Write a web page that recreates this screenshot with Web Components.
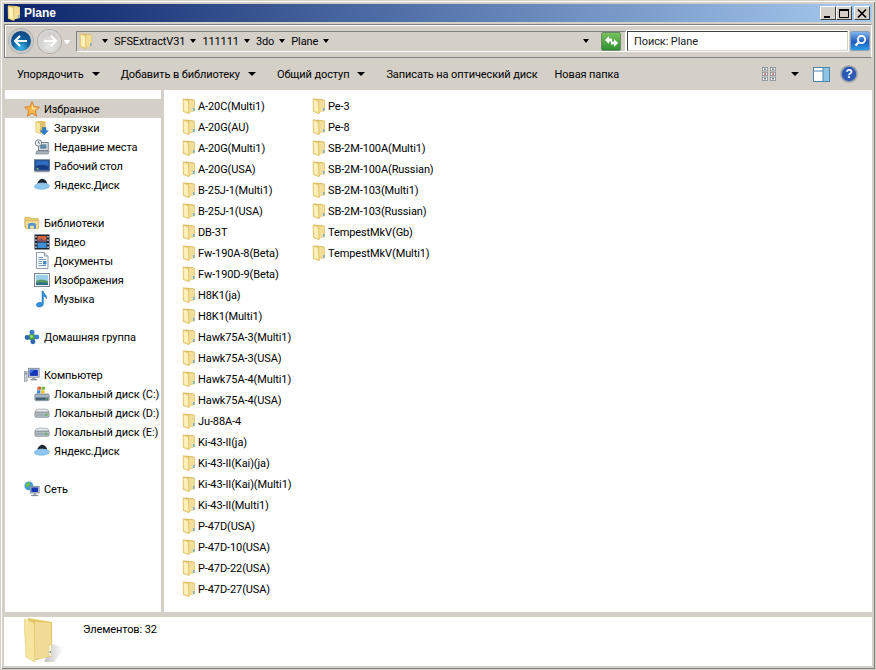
<!DOCTYPE html>
<html>
<head>
<meta charset="utf-8">
<style>
  html, body { margin: 0; padding: 0; height: 100%; overflow: hidden; background: #d4d0c8; }
  body { font: 11px Roboto, "Noto Sans", sans-serif; letter-spacing: -0.1px; color: #000; }
</style>
</head>
<body>
<explorer-window></explorer-window>

<script>
const FOLDER = `
  <svg width="16" height="16" viewBox="0 0 16 16">
    <path d="M2 .5 L11 1 L14 2 L14 13 L9 14 L9 15 L7 15.5 L2 13.5Z" fill="#dcc06a"/>
    <path d="M8 2 L13.5 2.5 L13.5 13 L8 14Z" fill="#f2de98"/>
    <path d="M2 1 L7.6 2.6 L8 15.6 L2.4 13.6Z" fill="#f7e6a0" stroke="#d9b95e" stroke-width=".6"/>
    <path d="M3 2.4 L6.6 3.4 L7 13.8 L3.4 12.6Z" fill="#fcf0bc"/>
    <rect x="12.2" y="10" width="1.2" height="3" fill="#5aa6dc"/>
  </svg>`;

const ICONS = {
  star: `<svg width="18" height="18" viewBox="0 0 18 18"><path d="M9 .8 L11.4 6.4 L17.4 7 L12.8 11 L14.2 17 L9 13.8 L3.8 17 L5.2 11 L.6 7 L6.6 6.4Z" fill="#f9b64a" stroke="#d87a28" stroke-width="1"/><path d="M9 3.5 L10.6 7.4 L14.4 8 L11.4 10.4 L9 9Z" fill="#fde39a"/></svg>`,
  downloads: `<svg width="18" height="18" viewBox="0 0 18 18"><path d="M2 1.5 L10 1 L13 2 L13 13 L7 15 L2 13.5Z" fill="#dcc06a"/><path d="M2 2 L7 3 L7.3 15.5 L2.4 13.5Z" fill="#f8e79f" stroke="#d8b85a" stroke-width=".6"/><path d="M9.5 8.5 H13.5 V12 H16 L11.5 16.8 L7 12 H9.5Z" fill="#2b7fd0" stroke="#1a5a9e" stroke-width=".5"/></svg>`,
  recent: `<svg width="18" height="18" viewBox="0 0 18 18"><rect x="5" y="4" width="11" height="9" fill="#dfe4e8" stroke="#69757f"/><rect x="7" y="6" width="7" height="5" fill="#5f87a6"/><path d="M3 13.5 H17 L16 17 H2Z" fill="#aab3bb" stroke="#69757f" stroke-width=".6"/><circle cx="5" cy="4.5" r="3.6" fill="#eef1f3" stroke="#6d7882"/><path d="M5 2.5 V4.6 H6.8" stroke="#3b4650" fill="none" stroke-width=".8"/></svg>`,
  desktop: `<svg width="18" height="18" viewBox="0 0 18 18"><rect x=".5" y="2" width="17" height="12.5" fill="#1f4f9c" stroke="#5c6d80"/><rect x="2" y="3.5" width="14" height="9.5" fill="#2d6cc0"/><path d="M2 9 Q8 7 16 9 V13 H2Z" fill="#163a80"/><rect x="3" y="11" width="2" height="2" fill="#7cc36a"/><rect x="1" y="14.5" width="16" height="1.5" fill="#8f9aa6"/></svg>`,
  cloud: `<svg width="18" height="14" viewBox="0 0 18 14"><path d="M3.5 6.5 C5 2 8 .5 10.5 1 C13 1.5 14.5 4 15 6.5 C11 5 7.5 5 3.5 6.5Z" fill="#1d2733"/><path d="M.5 9.5 C1 7 5 5.6 9.5 6 C13.5 6.2 17 7.2 17.3 8.6 C17.5 11 13 12.6 8.5 12.6 C4 12.6 .3 11.6 .5 9.5Z" fill="#8fc6ee" stroke="#5ba6e0" stroke-width=".6"/></svg>`,
  library: `<svg width="18" height="18" viewBox="0 0 18 18"><path d="M1 2.5 H7 L8.5 4 H16 V14 H1Z" fill="#e9cd74" stroke="#c7a548" stroke-width=".7"/><path d="M1 6.5 H17 L16 15.5 H2Z" fill="#f2de99" stroke="#c7a548" stroke-width=".6"/><path d="M4.5 15.5 V11 Q4.5 8.6 9 8.6 Q13.5 8.6 13.5 11 V15.5 H11 V12 H7 V15.5Z" fill="#5596cf"/></svg>`,
  video: `<svg width="16" height="16" viewBox="0 0 16 16"><rect x=".5" y=".5" width="15" height="15" fill="#1c2430"/><rect x="3.5" y="2" width="9" height="5.5" fill="#d9633a"/><rect x="3.5" y="8.5" width="9" height="5.5" fill="#3e8fd6"/><path d="M3.5 7 L7 4 L10 6.5 L12.5 5 V7.5 H3.5Z" fill="#76506a"/><g fill="#cfe0ef"><rect x="1.3" y="2" width="1.4" height="1.6"/><rect x="1.3" y="5.4" width="1.4" height="1.6"/><rect x="1.3" y="9" width="1.4" height="1.6"/><rect x="1.3" y="12.4" width="1.4" height="1.6"/><rect x="13.3" y="2" width="1.4" height="1.6"/><rect x="13.3" y="5.4" width="1.4" height="1.6"/><rect x="13.3" y="9" width="1.4" height="1.6"/><rect x="13.3" y="12.4" width="1.4" height="1.6"/></g></svg>`,
  docs: `<svg width="16" height="18" viewBox="0 0 16 18"><path d="M2.5 .5 H10.5 L14 4 V16.5 H2.5Z" fill="#f8fafc" stroke="#8d9aa8"/><path d="M10.5 .5 V4 H14" fill="#d7e1ea" stroke="#8d9aa8"/><g stroke="#7597bd"><path d="M4.5 5.5 H9"/><path d="M4.5 7.5 H12"/><path d="M4.5 9.5 H8"/><path d="M4.5 11.5 H8"/><path d="M4.5 13.5 H12"/></g><rect x="9" y="9" width="3.4" height="3.4" fill="#3f88c8"/></svg>`,
  pictures: `<svg width="16" height="14" viewBox="0 0 16 14"><rect x=".5" y=".5" width="15" height="13" fill="#f1f3f5" stroke="#7a8794"/><rect x="2" y="2" width="12" height="10" fill="#9bd0e8"/><path d="M2 8 Q7 5 14 8 V12 H2Z" fill="#5a9a68"/><path d="M2 10 Q8 8.4 14 10 V12 H2Z" fill="#2f6f8a"/></svg>`,
  music: `<svg width="14" height="18" viewBox="0 0 14 18"><path d="M7 1 L8.2 1 C8.6 4 12.6 5 11.5 9 C11 7 9.6 6.4 8.4 6.2 L8.4 14 C8.4 16 6 17.4 3.6 17 C1 16.6 .6 14.4 2.2 13.2 C3.8 12 6 12.2 7 13Z" fill="#2f8fd8" stroke="#1f6fb2" stroke-width=".5"/></svg>`,
  homegroup: `<svg width="18" height="18" viewBox="0 0 18 18"><circle cx="9" cy="9" r="4" fill="#4aa63f"/><circle cx="9" cy="3.6" r="2.8" fill="#3b7fd0"/><circle cx="3.6" cy="9.6" r="2.8" fill="#2e66b4"/><circle cx="14.4" cy="9" r="2.8" fill="#3b7fd0"/><circle cx="10" cy="14.4" r="2.8" fill="#2e66b4"/><circle cx="8.4" cy="8.4" r="1.6" fill="#9adf7a"/></svg>`,
  computer: `<svg width="18" height="18" viewBox="0 0 18 18"><rect x=".5" y="5" width="3" height="11" fill="#c8ced4" stroke="#7d8791" stroke-width=".7"/><rect x="1.2" y="7" width="1.6" height="1" fill="#44515c"/><rect x="5" y="1.5" width="12" height="10" fill="#d7dce1" stroke="#7d8791"/><rect x="6.4" y="3" width="9.2" height="7" fill="#1437b8"/><path d="M6.4 3 H12 L6.4 8Z" fill="#3a78e0"/><rect x="9" y="11.5" width="4" height="2" fill="#a7b0b8"/><rect x="7" y="13.5" width="8" height="1.5" fill="#8b959e"/></svg>`,
  diskC: `<svg width="18" height="18" viewBox="0 0 18 18"><rect x="1" y="9" width="16" height="7.5" rx="1.5" fill="#a8b6c2" stroke="#5a6875" stroke-width=".7"/><rect x="2" y="13" width="14" height="2.6" fill="#3f5a72"/><rect x="13" y="13.6" width="2" height="1.4" fill="#66d14f"/><path d="M4 1 Q6 0 8 1 L7.5 4.4 Q5.6 3.6 3.6 4.4Z" fill="#e4562c"/><path d="M8.6 1 Q10.6 0 12.6 1 L12.2 4.4 Q10 3.6 8.1 4.4Z" fill="#6cbb3c"/><path d="M3.5 5 Q5.5 4.2 7.4 5 L7 8.4 H3.2Z" fill="#3d89dc"/><path d="M8 5 Q10 4.2 12.1 5 L11.8 8.4 H7.6Z" fill="#f4c22e"/></svg>`,
  disk: `<svg width="18" height="14" viewBox="0 0 18 14"><path d="M1 7 Q1.5 3.5 5 3.5 H13 Q16.5 3.5 17 7Z" fill="#e8ebee" stroke="#8a949d" stroke-width=".7"/><rect x="1" y="7" width="16" height="5.6" rx="1.2" fill="#c4cbd1" stroke="#5e6972" stroke-width=".7"/><rect x="2" y="8.4" width="14" height="3" fill="#a1abb3"/><rect x="12.6" y="9" width="2.4" height="1.8" fill="#4fc13c"/></svg>`,
  network: `<svg width="18" height="18" viewBox="0 0 18 18"><circle cx="5.5" cy="5.5" r="5" fill="#3f9ad8"/><path d="M2 3.5 Q4 1 6.5 1.5 L7 4.5 L4.4 7 L2 6Z M7 7.5 L9.4 6.5 L9.6 9 L7.4 10.2Z" fill="#6cc04a"/><rect x="7" y="6" width="10" height="7.5" fill="#d7dce1" stroke="#7d8791"/><rect x="8.2" y="7.2" width="7.6" height="5.2" fill="#1437b8"/><rect x="11" y="13.5" width="2" height="2.5" fill="#8b959e"/><rect x="8" y="15.6" width="8" height="1.4" fill="#7f8a94"/></svg>`
};

class NavItem extends HTMLElement {
  constructor() {
    super();
    this.attachShadow({ mode: 'open' });
  }
  connectedCallback() {
    const icon = ICONS[this.getAttribute('icon')] || '';
    this.shadowRoot.innerHTML = `
      <style>
        :host { display: flex; align-items: center; height: 19px; white-space: nowrap; }
        :host([head]) { padding-left: 19px; }
        :host(:not([head])) { padding-left: 29px; }
        :host([selected]) { background: #d4d0c8; }
        .i { width: 16px; height: 18px; margin-right: 4px; flex: none; display: flex; align-items: center; justify-content: center; }
        .l { padding-top: 2px; }
        svg { display: block; max-width: 16px; height: auto; }
      </style>
      <span class="i">${icon}</span><span class="l"><slot></slot></span>`;
  }
}
customElements.define('nav-item', NavItem);

class NavPane extends HTMLElement {
  constructor() {
    super();
    this.attachShadow({ mode: 'open' });
    this.shadowRoot.innerHTML = `
      <style>
        :host { display: flex; flex-direction: column; width: 156px; margin-left: 1px; flex: none; background: #fff; padding-top: 9px; box-sizing: border-box; overflow: hidden; }
        .gap { height: 19px; flex: none; }
      </style>
      <nav-item icon="star" head selected>Избранное</nav-item>
      <nav-item icon="downloads">Загрузки</nav-item>
      <nav-item icon="recent">Недавние места</nav-item>
      <nav-item icon="desktop">Рабочий стол</nav-item>
      <nav-item icon="cloud">Яндекс.Диск</nav-item>
      <div class="gap"></div>
      <nav-item icon="library" head>Библиотеки</nav-item>
      <nav-item icon="video">Видео</nav-item>
      <nav-item icon="docs">Документы</nav-item>
      <nav-item icon="pictures">Изображения</nav-item>
      <nav-item icon="music">Музыка</nav-item>
      <div class="gap"></div>
      <nav-item icon="homegroup" head>Домашняя группа</nav-item>
      <div class="gap"></div>
      <nav-item icon="computer" head>Компьютер</nav-item>
      <nav-item icon="diskC">Локальный диск (C:)</nav-item>
      <nav-item icon="disk">Локальный диск (D:)</nav-item>
      <nav-item icon="disk">Локальный диск (E:)</nav-item>
      <nav-item icon="cloud">Яндекс.Диск</nav-item>
      <div class="gap"></div>
      <nav-item icon="network" head>Сеть</nav-item>`;
  }
}
customElements.define('nav-pane', NavPane);

const FOLDERS = ['A-20C(Multi1)','A-20G(AU)','A-20G(Multi1)','A-20G(USA)','B-25J-1(Multi1)','B-25J-1(USA)','DB-3T','Fw-190A-8(Beta)','Fw-190D-9(Beta)','H8K1(ja)','H8K1(Multi1)','Hawk75A-3(Multi1)','Hawk75A-3(USA)','Hawk75A-4(Multi1)','Hawk75A-4(USA)','Ju-88A-4','Ki-43-II(ja)','Ki-43-II(Kai)(ja)','Ki-43-II(Kai)(Multi1)','Ki-43-II(Multi1)','P-47D(USA)','P-47D-10(USA)','P-47D-22(USA)','P-47D-27(USA)','Pe-3','Pe-8','SB-2M-100A(Multi1)','SB-2M-100A(Russian)','SB-2M-103(Multi1)','SB-2M-103(Russian)','TempestMkV(Gb)','TempestMkV(Multi1)'];

class FileList extends HTMLElement {
  constructor() {
    super();
    this.attachShadow({ mode: 'open' });
    const rows = FOLDERS.map(n => `<div class="f">${FOLDER}<span>${n}</span></div>`).join('');
    this.shadowRoot.innerHTML = `
      <style>
        :host { display: block; flex: 1; background: #fff; overflow: hidden; }
        .grid { display: grid; grid-template-rows: repeat(24, 21px); grid-auto-flow: column; grid-auto-columns: 130px; padding: 5px 0 0 18px; }
        .f { display: flex; align-items: center; white-space: nowrap; }
        .f span { padding-top: 2px; }
        svg { flex: none; display: block; margin: 0 1px 0 -1px; }
      </style>
      <div class="grid">${rows}</div>`;
  }
}
customElements.define('file-list', FileList);

class TitleBar extends HTMLElement {
  constructor() {
    super();
    this.attachShadow({ mode: 'open' });
    this.shadowRoot.innerHTML = `
      <style>
        :host { display: flex; align-items: center; height: 18px; flex: none; margin-bottom: 2px; background: linear-gradient(90deg, #0a246a, #a6caf0); color: #fff; font: bold 12px "Liberation Sans", sans-serif; letter-spacing: 0; padding: 0 2px 0 2px; }
        .t { flex: 1; margin-left: 2px; }
        .b { width: 16px; height: 14px; background: #d4d0c8; box-sizing: border-box; border: 1px solid; border-color: #fff #404040 #404040 #fff; display: flex; align-items: center; justify-content: center; }
        .x { margin-left: 2px; }
        svg { display: block; }
      </style>
      ${FOLDER}<span class="t">Plane</span>
      <div class="b"><svg width="12" height="11"><rect x="2" y="8" width="6" height="2" fill="#000"/></svg></div>
      <div class="b"><svg width="12" height="11"><path d="M1.5 1.5 H10.5 V9.5 H1.5Z" fill="none" stroke="#000"/><rect x="1" y="1" width="10" height="2" fill="#000"/></svg></div>
      <div class="b x"><svg width="12" height="11"><path d="M2 1.5 L10 9.5 M10 1.5 L2 9.5" stroke="#000" stroke-width="1.7"/></svg></div>`;
  }
}
customElements.define('title-bar', TitleBar);

class NavBar extends HTMLElement {
  constructor() {
    super();
    this.attachShadow({ mode: 'open' });
    const crumb = t => `<span class="c">${t}</span><i class="a"></i>`;
    this.shadowRoot.innerHTML = `
      <style>
        :host { display: flex; align-items: center; height: 34px; flex: none; box-sizing: border-box; border: 1px solid; border-color: #808080 #fff #808080 #808080; box-shadow: inset 1px 1px 0 #fff; padding: 0 1px 0 4px; }
        .round { border-radius: 50%; flex: none; box-sizing: border-box; display: flex; align-items: center; justify-content: center; }
        .back { background: radial-gradient(circle at 50% 85%, #3fb6ea 0, #10609f 45%, #0b3c73 100%); border: 2px solid #c9c7c3; box-shadow: 0 0 0 1px #aeb1b4; width: 24px; height: 24px; }
        .fwd { background: radial-gradient(circle at 50% 70%, #e8e8e6, #c6c5c1); border: 2px solid #d8d6d2; box-shadow: 0 0 0 1px #aaa; width: 23px; height: 23px; margin-left: 5px; }
        .more { width: 0; height: 0; border: 4px solid transparent; border-top: 5px solid #fff; margin: 6px 0 0 2px; filter: drop-shadow(0 0 .5px #666); }
        .addr { flex: 1; height: 21px; margin-left: 5px; box-sizing: border-box; border: 1px solid; border-color: #808080 #fff #fff #808080; background: #d4d0c8; display: flex; align-items: center; padding-left: 1px; }
        .c { margin-right: 5px; }
        .a { display: block; flex: none; width: 0; height: 0; border: 3.5px solid transparent; border-top: 4px solid #000; border-bottom: 0; margin-right: 6px; }
        .a.first { margin: 0 6px 0 8px; }
        .sp { flex: 1; }
        .go { width: 20px; height: 19px; border-radius: 2px; background: linear-gradient(#76c45a, #2f8f32); border: 1px solid #6d8a68; box-sizing: border-box; margin: 0 4px 0 6px; display: flex; align-items: center; justify-content: center; }
        .drop { margin: 0 6px 0 0; }
        .search { width: 221px; height: 20px; flex: none; box-sizing: border-box; border: 1px solid; border-color: #404040 #d4d0c8 #d4d0c8 #404040; box-shadow: 0 0 0 1px #fff; background: #fff; display: flex; align-items: center; padding-left: 6px; color: #222; margin-left: 1px; }
        .sb { width: 20px; height: 20px; flex: none; background: linear-gradient(#7fb4ee, #1f5cc0 55%, #2aa0e8); border-radius: 2px; margin-left: 2px; border: 1px solid #8d9fb8; box-sizing: border-box; display: flex; align-items: center; justify-content: center; }
        svg { display: block; }
      </style>
      <div class="round back"><svg width="14" height="12" viewBox="0 0 14 12"><path d="M6 1 L1 6 L6 11 M1 6 H13" stroke="#fff" stroke-width="2.2" fill="none"/></svg></div>
      <div class="round fwd"><svg width="14" height="12" viewBox="0 0 14 12"><path d="M8 1 L13 6 L8 11 M13 6 H1" stroke="#fff" stroke-width="2" fill="none"/></svg></div>
      <div class="more"></div>
      <div class="addr">${FOLDER}<i class="a first"></i>${crumb('SFSExtractV31')}${crumb('111111')}${crumb('3do')}${crumb('Plane')}
        <div class="sp"></div><i class="a drop"></i>
        <div class="go"><svg width="17" height="17" viewBox="0 0 17 17"><path d="M2 7 L6 3 V5.6 H9 V8.4 H6 V11Z M15 10 L11 14 V11.4 H8 V8.6 H11 V6Z" fill="#fff"/></svg></div>
      </div>
      <div class="search">Поиск: Plane</div>
      <div class="sb"><svg width="14" height="14" viewBox="0 0 14 14"><circle cx="8.5" cy="5.5" r="3.6" fill="none" stroke="#fff" stroke-width="1.8"/><path d="M6 8 L2.5 11.5" stroke="#fff" stroke-width="2.4"/></svg></div>`;
  }
}
customElements.define('nav-bar', NavBar);

class ToolBar extends HTMLElement {
  constructor() {
    super();
    this.attachShadow({ mode: 'open' });
    this.shadowRoot.innerHTML = `
      <style>
        :host { display: flex; flex: none; align-items: center; height: 32px; padding: 0 14px 0 13px; white-space: nowrap; }
        .m { display: flex; align-items: center; margin-right: 21px; }
        .m.plain { margin-right: 17px; }
        .m i { display: block; width: 0; height: 0; border: 4px solid transparent; border-top: 4.5px solid #000; border-bottom: 0; margin-left: 8px; }
        .sp { flex: 1; }
        .r { display: flex; align-items: center; }
        svg { display: block; }
        .caret { display: block; width: 0; height: 0; border: 4px solid transparent; border-top: 4.5px solid #000; border-bottom: 0; margin: 0 14px 0 14px; }
      </style>
      <div class="m">Упорядочить<i></i></div>
      <div class="m">Добавить в библиотеку<i></i></div>
      <div class="m">Общий доступ<i></i></div>
      <div class="m plain">Записать на оптический диск</div>
      <div class="m plain">Новая папка</div>
      <div class="sp"></div>
      <div class="r">
        <svg width="16" height="16" viewBox="0 0 16 16"><g fill="#f4f5f6" stroke="#7f8a94" stroke-width=".8"><rect x="1.5" y="1.5" width="5" height="3.4"/><rect x="1.5" y="6.3" width="5" height="3.4"/><rect x="1.5" y="11.1" width="5" height="3.4"/><rect x="9.5" y="1.5" width="5" height="3.4"/><rect x="9.5" y="6.3" width="5" height="3.4"/><rect x="9.5" y="11.1" width="5" height="3.4"/></g><g fill="#57616a"><rect x="3" y="2.6" width="2" height="1.2"/><rect x="3" y="12.2" width="2" height="1.2"/><rect x="11" y="2.6" width="2" height="1.2"/><rect x="11" y="12.2" width="2" height="1.2"/></g><rect x="11" y="7.4" width="2" height="1.2" fill="#c8332b"/><rect x="3" y="7.4" width="2" height="1.2" fill="#c8332b"/></svg>
        <i class="caret"></i>
        <svg width="17" height="15" viewBox="0 0 17 15"><rect x=".5" y=".5" width="16" height="14" fill="#fff" stroke="#4b86ae"/><rect x="10" y="1" width="6" height="13" fill="#8cc4e2"/><path d="M10 1 V14 M1 4 H10" stroke="#4b86ae"/></svg>
        <svg style="margin-left:10px" width="18" height="18" viewBox="0 0 18 18"><circle cx="9" cy="9" r="8" fill="#2a58b4" stroke="#9aa0a8" stroke-width="1.6"/><text x="9" y="13.4" text-anchor="middle" font-family="Liberation Sans" font-weight="bold" font-size="12" fill="#fff">?</text></svg>
      </div>`;
  }
}
customElements.define('tool-bar', ToolBar);

class DetailsPane extends HTMLElement {
  constructor() {
    super();
    this.attachShadow({ mode: 'open' });
    this.shadowRoot.innerHTML = `
      <style>
        :host { display: flex; height: 49px; background: #fff; flex: none; overflow: hidden; }
        svg { display: block; margin: 1px 0 0 20px; flex: none; }
        .t { margin: 6px 0 0 15px; }
      </style>
      <svg width="44" height="46" viewBox="0 0 44 46">
        <defs><linearGradient id="s" x1="0" x2="1"><stop offset="0" stop-color="#999"/><stop offset="1" stop-color="#fff"/></linearGradient></defs>
        <path d="M28 26 L40 30 L30 44 L20 44Z" fill="url(#s)" opacity=".6"/>
        <path d="M4 0 L28 4 V38 L12 42 L4 38Z" fill="#e3c767"/>
        <path d="M11 4 L27 5 V38 L11 41Z" fill="#f0dc96"/>
        <path d="M0 1 L10 5 L11 44 L2 39Z" fill="#f6e59f" stroke="#e2c76f" stroke-width=".6"/>
        <rect x="25" y="27" width="2.5" height="11" fill="#fff" stroke="#e0c870" stroke-width=".5"/>
        <rect x="25.5" y="33" width="1.4" height="2" fill="#4a9bdc"/>
      </svg>
      <div class="t">Элементов: 32</div>`;
  }
}
customElements.define('details-pane', DetailsPane);

class ExplorerWindow extends HTMLElement {
  constructor() {
    super();
    this.attachShadow({ mode: 'open' });
    this.shadowRoot.innerHTML = `
      <style>
        :host { display: flex; flex-direction: column; width: 876px; height: 670px; box-sizing: border-box; background: #d4d0c8; padding: 4px; box-shadow: inset 0 0 0 1px #d4d0c8, inset 2px 2px 0 #fff, inset -1px -1px 0 #404040, inset -2px -2px 0 #808080; }
        .split { display: flex; flex: 1; min-height: 0; gap: 3px; margin-bottom: 5px; }
      </style>
      <title-bar></title-bar>
      <nav-bar></nav-bar>
      <tool-bar></tool-bar>
      <div class="split"><nav-pane></nav-pane><file-list></file-list></div>
      <details-pane></details-pane>`;
  }
}
customElements.define('explorer-window', ExplorerWindow);
</script>
</body>
</html>
